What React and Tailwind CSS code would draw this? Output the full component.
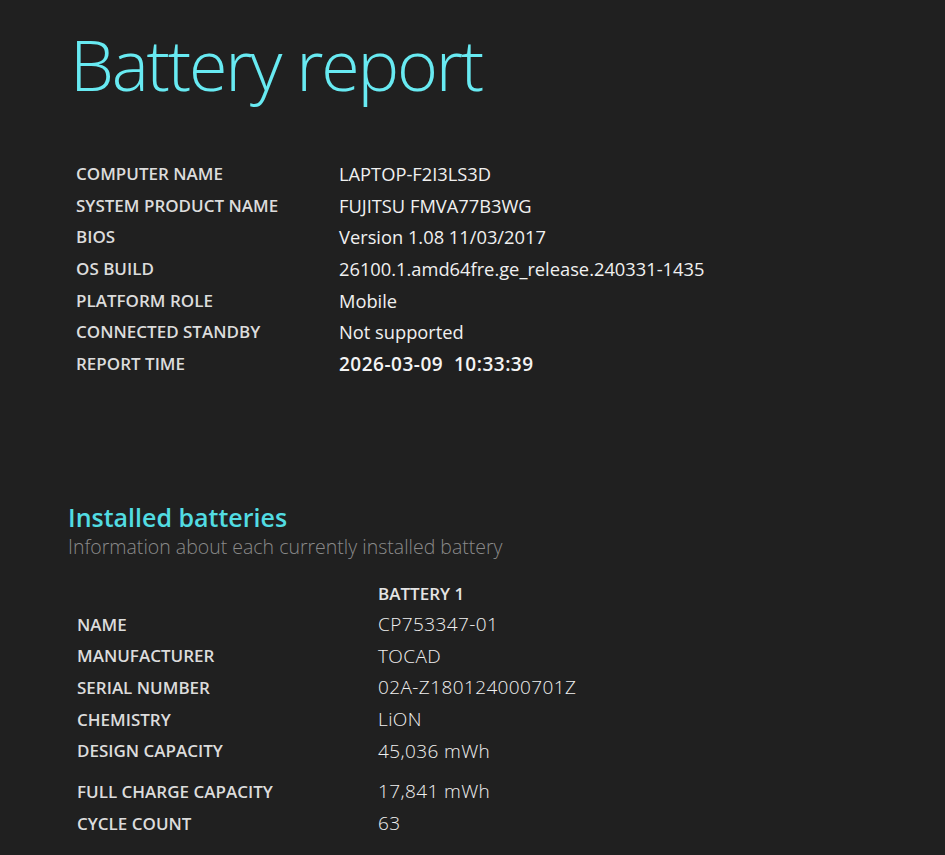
import React from 'react';

const systemInfo = [
  ['COMPUTER NAME', 'LAPTOP-F2I3LS3D'],
  ['SYSTEM PRODUCT NAME', 'FUJITSU FMVA77B3WG'],
  ['BIOS', 'Version 1.08 11/03/2017'],
  ['OS BUILD', '26100.1.amd64fre.ge_release.240331-1435'],
  ['PLATFORM ROLE', 'Mobile'],
  ['CONNECTED STANDBY', 'Not supported'],
];

const battery = [
  ['NAME', 'CP753347-01'],
  ['MANUFACTURER', 'TOCAD'],
  ['SERIAL NUMBER', '02A-Z180124000701Z'],
  ['CHEMISTRY', 'LiON'],
  ['DESIGN CAPACITY', '45,036 mWh'],
];

export default function App() {
  return (
    <div className="min-h-[855px] w-full bg-[#202020] text-[#e8e8e8]" style={{ fontFamily: '"Open Sans", "Noto Sans", sans-serif' }}>
      <div className="pl-[70px] pt-[16px]">
        <h1 className="text-[70px] leading-[96px] font-light tracking-[-2.2px] text-[#68eaf2]">Battery report</h1>

        {/* System info */}
        <div className="mt-[46px] pl-[6px] flex flex-col">
          {systemInfo.map(([k, v]) => (
            <div key={k} className="flex items-center h-[31.67px]">
              <div className="w-[263px] text-[17px] font-semibold text-[#dcdcdc]">{k}</div>
              <div className="text-[18.3px] text-[#f0f0f0]">{v}</div>
            </div>
          ))}
          <div className="flex items-center h-[31.67px]">
            <div className="w-[263px] text-[17px] font-semibold text-[#dcdcdc]">REPORT TIME</div>
            <div className="text-[19px] font-semibold tracking-[0.5px] text-[#f4f4f4] whitespace-pre">2026-03-09  10:33:39</div>
          </div>
        </div>

        {/* Installed batteries */}
        <div className="mt-[121px] -ml-[2px]">
          <h2 className="text-[25px] leading-[32px] font-semibold text-[#52dce2]">Installed batteries</h2>
          <p className="text-[19.5px] leading-[28px] font-light text-[#8a8a8a]">Information about each currently installed battery</p>
        </div>

        <div className="mt-[18px] pl-[7px] flex flex-col">
          <div className="flex items-center h-[30px]">
            <div className="w-[301px]"></div>
            <div className="text-[17px] font-semibold text-[#e4e4e4]">BATTERY 1</div>
          </div>
          {battery.map(([k, v]) => (
            <div key={k} className="flex items-center h-[31.67px]">
              <div className="w-[301px] text-[17px] font-semibold text-[#dcdcdc]">{k}</div>
              <div className="text-[19px] font-light tracking-[0.4px] text-[#f0f0f0]">{v}</div>
            </div>
          ))}
          <div className="flex items-center h-[31.67px] mt-[9px]">
            <div className="w-[301px] text-[17px] font-semibold text-[#dcdcdc]">FULL CHARGE CAPACITY</div>
            <div className="text-[19px] font-light tracking-[0.4px] text-[#f0f0f0]">17,841 mWh</div>
          </div>
          <div className="flex items-center h-[31.67px]">
            <div className="w-[301px] text-[17px] font-semibold text-[#dcdcdc]">CYCLE COUNT</div>
            <div className="text-[19px] font-light tracking-[0.4px] text-[#f0f0f0]">63</div>
          </div>
        </div>
      </div>
    </div>
  );
}
